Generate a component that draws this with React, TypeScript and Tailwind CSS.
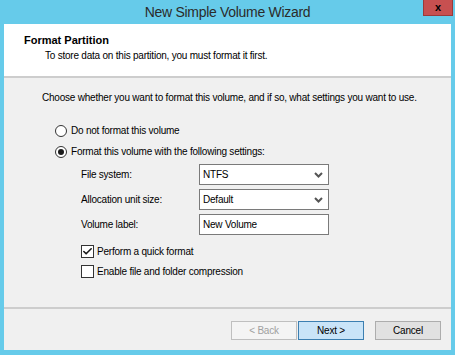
import { Check } from "lucide-react";

function Radio({ checked, label }: { checked?: boolean; label: string }) {
  return (
    <div className="flex h-[21px] items-center gap-[4px]">
      <span className="grid h-[12px] w-[12px] place-items-center rounded-full border border-[#333333] bg-white">
        {checked && <span className="h-[6px] w-[6px] rounded-full bg-[#1a1a1a]" />}
      </span>
      <span>{label}</span>
    </div>
  );
}

function CheckRow({ checked, label }: { checked?: boolean; label: string }) {
  return (
    <div className="flex h-[20px] items-center gap-[3px]">
      <span className="grid h-[13px] w-[13px] place-items-center border border-[#333333] bg-white">
        {checked && <Check size={11} strokeWidth={3.5} className="text-[#1a1a1a]" />}
      </span>
      <span>{label}</span>
    </div>
  );
}

function Select({ value }: { value: string }) {
  return (
    <div className="flex h-[21px] w-[130px] items-center justify-between border border-[#7a7a7a] bg-white pl-[3px] pr-[4px]">
      <span>{value}</span>
      <svg width="9" height="6" viewBox="0 0 9 6" className="mr-[1px]">
        <path d="M1 1 L4.5 4.5 L8 1" fill="none" stroke="#555555" strokeWidth="2" />
      </svg>
    </div>
  );
}

function Btn({ label, kind }: { label: string; kind: "disabled" | "default" | "normal" }) {
  const cls =
    kind === "disabled"
      ? "border-[#bfbfbf] bg-[#f4f4f4] text-[#a0a0a0]"
      : kind === "default"
        ? "border-[#3c7fb1] bg-[#c9e4f8] text-black"
        : "border-[#adadad] bg-[#e1e1e1] text-black";
  return (
    <div className={`grid h-[19px] w-[66px] place-items-center border ${cls}`}>{label}</div>
  );
}

export default function App() {
  return (
    <div
      className="flex h-[355px] w-[455px] flex-col whitespace-nowrap bg-[#66cbea] text-[10px] leading-[13px] tracking-[-0.22px] text-black"
      style={{ fontFamily: '"Liberation Sans", Arial, sans-serif' }}
    >
      {/* title bar */}
      <div className="relative flex h-[24px] shrink-0 items-center justify-center">
        <span className="text-[14px] leading-[18px] tracking-[-0.3px] text-[#2b2b2b]">New Simple Volume Wizard</span>
        <div className="absolute right-[2px] top-0 grid h-[16px] w-[30px] place-items-center border border-[#9b3a3a] border-t-0 bg-[#c75050]">
          <span className="text-[11px] font-bold leading-[11px] text-black">x</span>
        </div>
      </div>

      <div className="mx-[4px] mb-[5px] flex flex-1 flex-col bg-[#f0f0f0]">
        {/* header */}
        <div className="h-[54px] shrink-0 border-b-2 border-[#cdcdcd] bg-white pl-[20px] pt-[10px]">
          <p className="text-[11px] font-bold tracking-normal">Format Partition</p>
          <p className="mt-[2px] pl-[21px]">To store data on this partition, you must format it first.</p>
        </div>

        {/* body */}
        <div className="flex-1 pl-[38px] pt-[13px]">
          <p>Choose whether you want to format this volume, and if so, what settings you want to use.</p>
          <div className="mt-[16px] pl-[13px]">
            <Radio label="Do not format this volume" />
            <Radio checked label="Format this volume with the following settings:" />
            <div className="mt-[2px] flex flex-col gap-[4px] pl-[26px]">
              <div className="flex items-center">
                <span className="w-[118px]">File system:</span>
                <Select value="NTFS" />
              </div>
              <div className="flex items-center">
                <span className="w-[118px]">Allocation unit size:</span>
                <Select value="Default" />
              </div>
              <div className="flex items-center">
                <span className="w-[118px]">Volume label:</span>
                <div className="flex h-[21px] w-[130px] items-center border border-[#7a7a7a] bg-white pl-[3px]">
                  New Volume
                </div>
              </div>
            </div>
            <div className="mt-[6px] pl-[26px]">
              <CheckRow checked label="Perform a quick format" />
              <CheckRow label="Enable file and folder compression" />
            </div>
          </div>
        </div>

        {/* footer */}
        <div className="h-[43px] shrink-0 border-t-2 border-[#cdcdcd] pt-[12px]">
          <div className="flex justify-end pr-[10px]">
            <Btn label="< Back" kind="disabled" />
            <div className="ml-[1px]">
              <Btn label="Next >" kind="default" />
            </div>
            <div className="ml-[11px]">
              <Btn label="Cancel" kind="normal" />
            </div>
          </div>
        </div>
      </div>
    </div>
  );
}
